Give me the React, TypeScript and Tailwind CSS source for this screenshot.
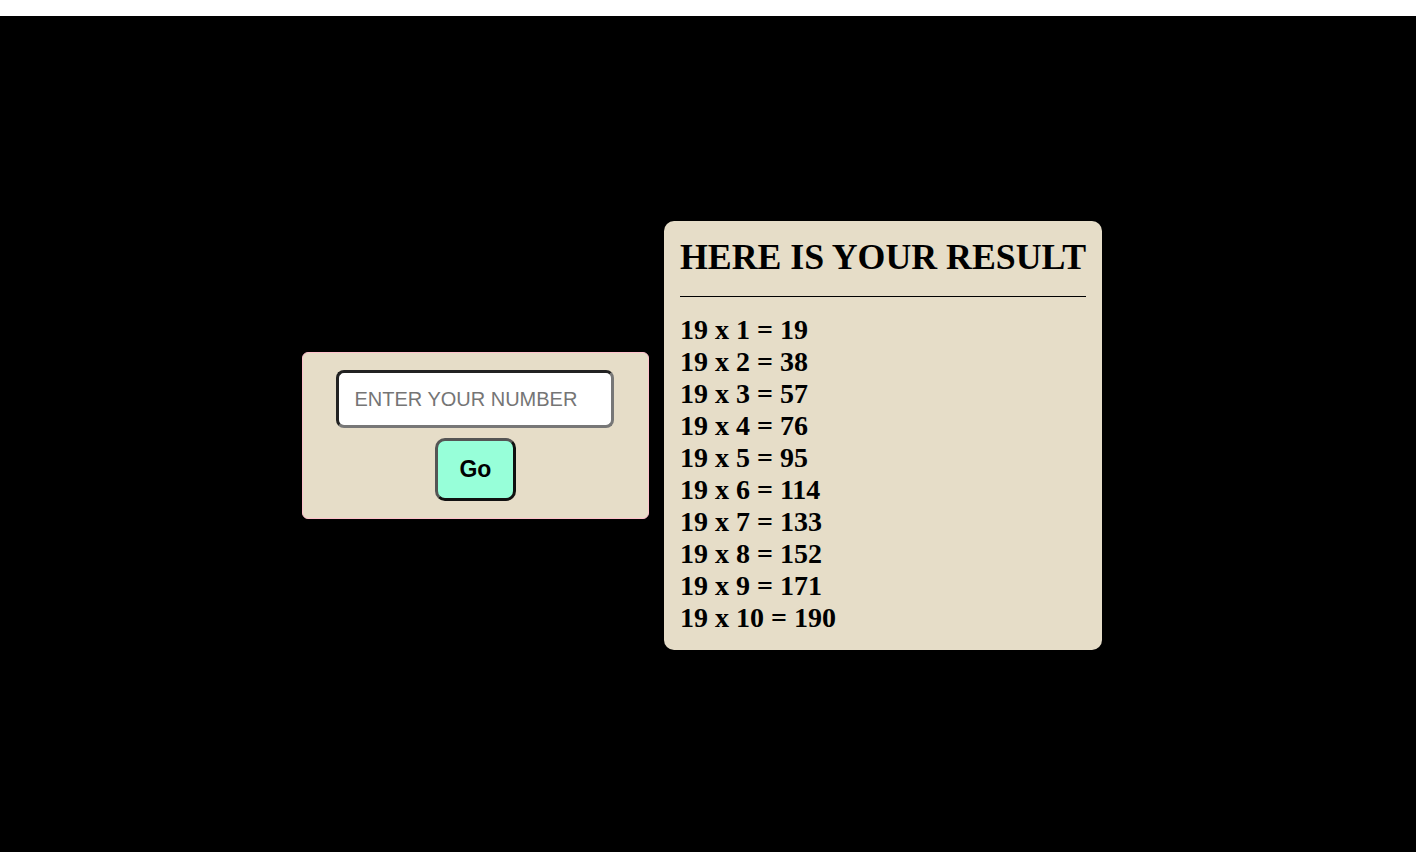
import React from 'react';

const num = 19;
const rows = Array.from({ length: 10 }, (_, i) => i + 1);

export default function App() {
  return (
    <div className="min-h-[852px] bg-white pt-[16px]">
      <div className="flex h-[836px] items-center justify-center gap-[15px] bg-black pr-[12px] pt-[3px]">
        <div className="flex w-[347px] flex-col items-center gap-[10px] rounded-[6px] border border-[#ffc0cb] bg-[#e6ddc8] pt-[17px] pb-[17px]">
          <input
            type="text"
            placeholder="ENTER YOUR NUMBER"
            className="h-[58px] w-[278px] rounded-[8px] border-[3px] border-t-[#222] border-l-[#222] border-b-[#777] border-r-[#777] bg-white px-[15px] font-['Liberation_Sans',Arial,sans-serif] text-[20px] text-black outline-none placeholder:text-[#757575]"
          />
          <button className="h-[63px] w-[81px] rounded-[10px] border-[3px] border-t-[#555] border-l-[#555] border-b-[#111] border-r-[#111] bg-[#97ffd9] font-['Liberation_Sans',Arial,sans-serif] text-[23px] font-bold text-black">
            Go
          </button>
        </div>

        <div className="rounded-[10px] bg-[#e6ddc8] p-4 font-['Liberation_Serif','Times_New_Roman',serif] text-black">
          <h2 className="whitespace-nowrap text-[35.8px] font-bold leading-[1.15]">HERE IS YOUR RESULT</h2>
          <hr className="mt-[18px] mb-[17px] border-0 border-t border-black" />
          <div className="text-[28px] font-bold leading-[32px]">
            {rows.map((i) => (
              <div key={i}>
                {num} x {i} = {num * i}
              </div>
            ))}
          </div>
        </div>
      </div>
    </div>
  );
}
